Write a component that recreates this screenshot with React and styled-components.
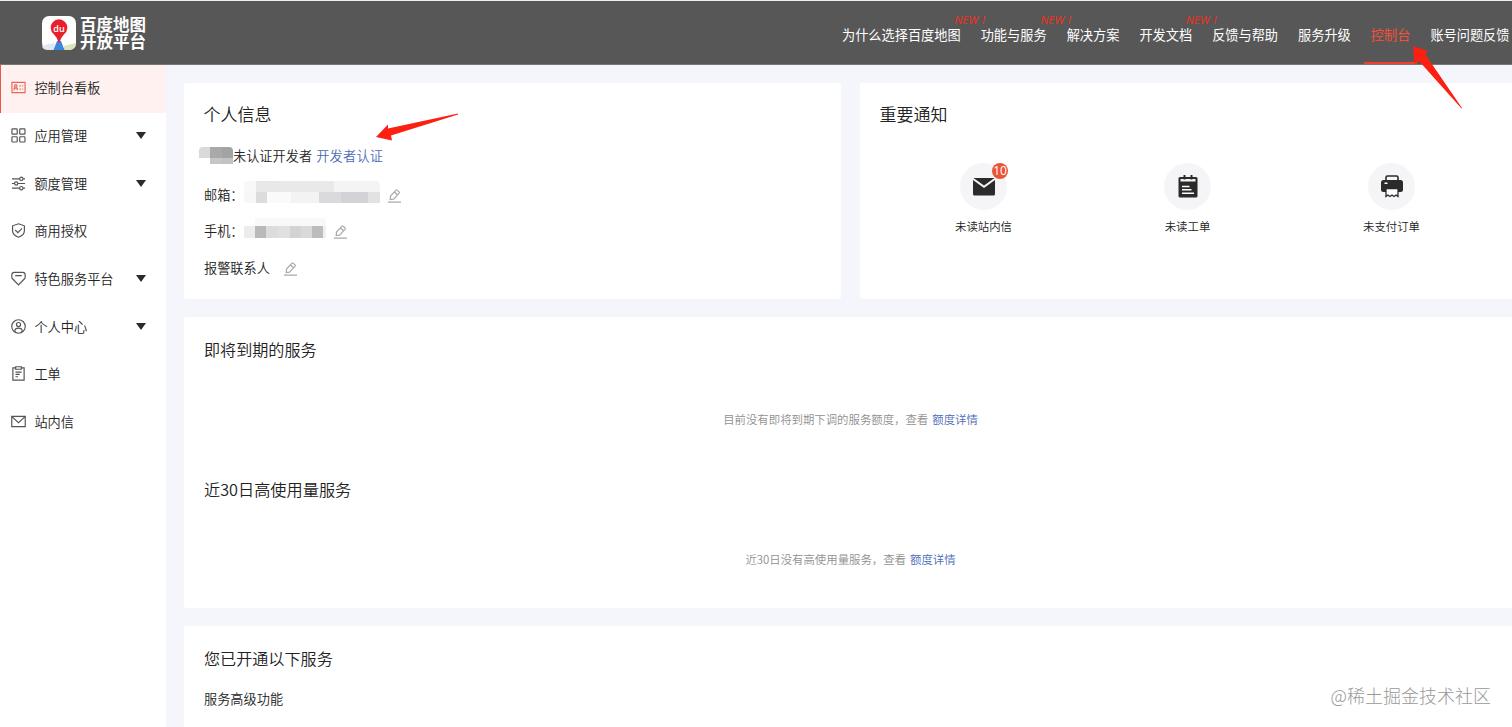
import styled, { createGlobalStyle } from 'styled-components';

// ==========================================
//              GLOBAL STYLES
// ==========================================
const GlobalStyle = createGlobalStyle`
  * {
    box-sizing: border-box;
  }

  body {
    margin: 0;
    overflow: hidden;
    background: #f5f6fb;
    color: #222;
    font-family: 'Noto Sans CJK SC', sans-serif;
    font-size: 13.2px;
    font-weight: 350;
  }
`;

const Page = styled.div`
  position: relative;
  width: 1512px;
  height: 727px;
  overflow: hidden;
`;

// ==========================================
//                 HEADER
// ==========================================
const Header = styled.header`
  display: flex;
  justify-content: space-between;
  height: 65px;
  padding-left: 42px;
  border-top: 1px solid #eef0ea;
  border-bottom: 1px solid #777;
  background: #575757;
`;

const Logo = styled.div`
  display: flex;
  align-items: center;
  gap: 4px;
`;

const LogoText = styled.div`
  display: flex;
  flex-direction: column;
  color: #fff;
  font-size: 16.5px;
  font-weight: 700;
  line-height: 17px;
`;

const Nav = styled.nav`
  display: flex;
  flex: none;
  margin-right: -8px;
`;

const NavItem = styled.a`
  position: relative;
  padding: 0 ${({ $last }) => ($last ? '10.5px' : '10px')} 0 10px;
  color: ${({ $active }) => ($active ? '#f2503c' : '#fff')};
  font-weight: 400;
  line-height: 68px;
  white-space: nowrap;

  &::after {
    content: '';
    display: ${({ $active }) => ($active ? 'block' : 'none')};
    position: absolute;
    left: 3px;
    right: 3px;
    top: 61px;
    height: 2px;
    background: #f2402c;
  }
`;

const NewTag = styled.em`
  position: absolute;
  top: 12px;
  left: calc(100% - 16.5px);
  color: #f2301c;
  font-family: 'Open Sans', sans-serif;
  font-size: 11.5px;
  font-weight: 500;
  line-height: 14px;
  word-spacing: 1px;
`;

// ==========================================
//                 SIDEBAR
// ==========================================
const Body = styled.div`
  display: flex;
  height: 662px;
`;

const Sidebar = styled.aside`
  flex: none;
  width: 166px;
  background: #fff;
`;

const MenuItem = styled.div`
  display: flex;
  align-items: center;
  height: 47.7px;
  padding: 0 20px 2px 10px;
  border-left: 1px solid ${({ $active }) => ($active ? '#e8574a' : 'transparent')};
  background: ${({ $active }) => ($active ? '#fff1ef' : '#fff')};
  color: ${({ $active }) => ($active ? '#e8675a' : '#555')};

  svg {
    flex: none;
  }
`;

const MenuLabel = styled.span`
  flex: 1;
  margin-left: 8.4px;
  color: #222;
`;

const Caret = styled.i`
  border: 5px solid transparent;
  border-top: 7px solid #2b2b2b;
  border-bottom: 0;
`;

// ==========================================
//                 CONTENT
// ==========================================
const Main = styled.main`
  flex: none;
  display: flex;
  flex-direction: column;
  gap: 18px;
  width: 1351px;
  padding: 18px 0 0 18px;
`;

const TopRow = styled.div`
  display: flex;
  gap: 19px;
  height: 216px;
`;

const Card = styled.section`
  flex: none;
  width: ${({ $width }) => $width || '1333px'};
  height: ${({ $height }) => $height || 'auto'};
  padding: 20px;
  border-radius: 3px;
  background: #fff;
`;

const CardTitle = styled.h2`
  margin: 0;
  font-size: ${({ $size }) => $size || '16.1px'};
  font-weight: 350;
  line-height: 24px;
`;

const InfoTitle = styled(CardTitle)`
  margin: -1px 0 0 -0.5px;
  padding-bottom: 1px;
`;

const InfoRow = styled.div`
  display: flex;
  align-items: center;
  height: ${({ $first }) => ($first ? '37px' : '36.7px')};
  margin: ${({ $first }) => ($first ? '10px 0 1.7px -5px' : '0')};

  svg {
    margin: 3px 0 0 ${({ $iconGap }) => $iconGap || '8px'};
  }
`;

const FieldLabel = styled.span`
  width: 40px;
  white-space: nowrap;
`;

const Link = styled.a`
  margin-left: 4px;
  color: #4a6bb8;
`;

const VerifyLink = styled(Link)`
  letter-spacing: 0.25px;
`;

/* Pixelated strip that hides the private account data */
const Mosaic = styled.div`
  width: ${({ $width }) => $width}px;
  height: ${({ $height }) => $height}px;
  margin: ${({ $margin }) => $margin || '0'};
  border-radius: 4px 4px 0 0;
  overflow: hidden;
`;

const MosaicLine = styled.div`
  display: flex;
  height: ${({ $height }) => $height}px;
`;

const MosaicCell = styled.span`
  flex: ${({ $span }) => $span} 0 0;
  background: ${({ $tone }) => $tone};
`;

const Notices = styled.div`
  display: flex;
  margin: 36px 0 0 1.5px;
`;

const Notice = styled.div`
  display: flex;
  flex-direction: column;
  align-items: center;
  width: 204px;
  font-size: 11.4px;
  line-height: 18px;
`;

const NoticeIcon = styled.div`
  position: relative;
  display: flex;
  align-items: center;
  justify-content: center;
  width: 47px;
  height: 47px;
  margin-bottom: 7px;
  border-radius: 50%;
  background: #f5f5f7;
`;

const Badge = styled.span`
  position: absolute;
  top: 0;
  right: -1px;
  width: 16px;
  height: 16px;
  border-radius: 50%;
  background: #ea5439;
  color: #fff;
  font-family: 'Open Sans', sans-serif;
  font-size: 12px;
  font-weight: 500;
  line-height: 16px;
  text-align: center;
`;

const Empty = styled.p`
  margin: 0;
  padding: ${({ $padding }) => $padding};
  color: #909090;
  font-size: 11.4px;
  line-height: 20px;
  text-align: center;
`;

const SubTitle = styled.h3`
  margin: 17px 0 0;
  font-size: 13.2px;
  font-weight: 350;
  line-height: 24px;
`;

const Arrow = styled.svg`
  position: absolute;
  left: ${({ $left }) => $left}px;
  top: ${({ $top }) => $top}px;
  fill: #fb2010;
`;

const Watermark = styled.div`
  position: absolute;
  right: 21px;
  bottom: 18px;
  color: #999;
  font-size: 18px;
  font-weight: 300;
  line-height: 27px;
`;

// ==========================================
//                  ICONS
// ==========================================
const Icon = ({ children, size = 15 }) => (
  <svg width={size} height={size} viewBox="0 0 16 16" fill="none" stroke="currentColor" strokeWidth="1.25">
    {children}
  </svg>
);

const icons = {
  board: (
    <Icon>
      <path d="M1 2.5h14v11H1zM3.3 11V8.6h3.4V11M9 6.2h1.5M12 6.2h1M9 9.8h1.5M12 9.8h1" />
      <circle cx="5" cy="6.3" r="1.3" />
    </Icon>
  ),
  apps: (
    <Icon>
      <rect x="1" y="1" width="5.6" height="5.6" rx=".7" />
      <rect x="9.3" y="1" width="5.6" height="5.6" rx=".7" />
      <rect x="1" y="9.3" width="5.6" height="5.6" rx=".7" />
      <rect x="9.3" y="9.3" width="5.6" height="5.6" rx=".7" />
    </Icon>
  ),
  quota: (
    <Icon>
      <path d="M1 3h8M13 3h2M1 8h2.5M7.5 8H15M1 13h8M13 13h2" />
      <circle cx="11" cy="3" r="1.8" />
      <circle cx="5.5" cy="8" r="1.8" />
      <circle cx="11" cy="13" r="1.8" />
    </Icon>
  ),
  shield: (
    <Icon>
      <path d="M8 .8 14.3 3v5.2c0 3.2-2.5 5.6-6.3 7-3.8-1.4-6.3-3.8-6.3-7V3L8 .8ZM4.5 7.5l2.8 2.7 4.5-4.5" />
    </Icon>
  ),
  feature: (
    <Icon>
      <path d="M3.5 1.4h9c1.5 0 2.6 1.2 2.6 2.6v2.8c0 .6-.3 1.1-.7 1.5L8 14.8 1.6 8.3c-.4-.4-.7-.9-.7-1.5V4c0-1.4 1.1-2.6 2.6-2.6ZM4.5 5h7" />
    </Icon>
  ),
  user: (
    <Icon>
      <circle cx="8" cy="8" r="7.2" />
      <circle cx="8" cy="5.9" r="2.2" />
      <path d="M4.2 13.8v-1.5C4.2 10.5 5.8 9.7 8 9.7s3.8.8 3.8 2.6v1.5" />
    </Icon>
  ),
  order: (
    <Icon>
      <path d="M5 2H2v13h12V2h-3M5 .8h6v2.7H5zM4.8 6.5h6.5M4.8 9h4.5M4.8 11.5h2.7" />
    </Icon>
  ),
  mail: (
    <Icon>
      <path d="M.8 2.5h14.4v11H.8zM1 2.8l7 6.4 7-6.4" />
    </Icon>
  ),
};

const EditIcon = () => (
  <svg width="13" height="14" viewBox="0 0 13 14" fill="none" stroke="#aaa" strokeWidth="1.2">
    <path d="M0 13.2h13M2.2 10.6l.3-3.5L8 1.2q.6-.6 1.2 0l1.9 1.7q.6.6 0 1.2L5.600 10.1l-3.400.5ZM6.500 3l2.900 2.700" />
  </svg>
);

const LogoMark = () => (
  <svg width="34" height="34" viewBox="0 0 34 34">
    <rect width="34" height="34" rx="7" fill="#fff" />
    <path d="M0 30.5 6 28l7-1-1 7H7q-6 0-7-3.5Z" fill="#dfe9f4" />
    <path d="M22 34v-4l12-3q0 7-7 7Z" fill="#d9e6ba" />
    <path d="m15 25-3.5 9h11L19 25Z" fill="#3b87dd" />
    <path d="M17 27.5Q15.7 22 11.7 18A8.3 8.3 0 1 1 22.3 18Q18.3 22 17 27.5Z" fill="#e9202c" />
    <text x="17" y="15.5" fill="#fff" fontSize="9" fontWeight="600" fontFamily="Open Sans" textAnchor="middle">du</text>
  </svg>
);

const noticeIcons = {
  mail: (
    <svg width="24" height="20" viewBox="0 0 24 20" fill="#2b2b2b">
      <path d="M1.5 1h21L12 8.5ZM1 3l11 8 11-8v14q0 1.5-1.5 1.5h-19Q1 18.5 1 17Z" />
    </svg>
  ),
  order: (
    <svg width="20" height="23" viewBox="0 0 20 23">
      <rect x=".5" y="2" width="19" height="20.5" rx="1.5" fill="#2b2b2b" />
      <path d="M2.5 4h15v2.5h-15z" fill="#f5f5f7" />
      <path d="M6.5 0v4.5M13.5 0v4.5" stroke="#2b2b2b" strokeWidth="2" />
      <path d="M4 11.5h7.5M4 14.8h9.5M4 18.2h12" stroke="#fff" strokeWidth="1.5" />
    </svg>
  ),
  print: (
    <svg width="22" height="23" viewBox="0 0 22 23">
      <path d="M5 6V2.5q0-1.5 1.5-1.5h9q1.5 0 1.5 1.5V6" fill="none" stroke="#2b2b2b" strokeWidth="1.6" />
      <rect y="5" width="22" height="12" rx="2.5" fill="#2b2b2b" />
      <path d="M3.5 7.5H6.5V9H3.5z" fill="#fff" />
      <path d="M5 13.5h12V21.5l-2-1.5L13 21.5l-2-1.5L9 21.5l-2-1.5L5 21.5Z" fill="#fff" stroke="#2b2b2b" strokeWidth="1.3" />
    </svg>
  ),
};

// ==========================================
//                   DATA
// ==========================================
const navItems = [
  { text: '为什么选择百度地图', isNew: true },
  { text: '功能与服务', isNew: true },
  { text: '解决方案' },
  { text: '开发文档', isNew: true },
  { text: '反馈与帮助' },
  { text: '服务升级' },
  { text: '控制台', active: true },
  { text: '账号问题反馈', last: true },
];

const menuItems = [
  { text: '控制台看板', icon: 'board', active: true },
  { text: '应用管理', icon: 'apps', expandable: true },
  { text: '额度管理', icon: 'quota', expandable: true },
  { text: '商用授权', icon: 'shield' },
  { text: '特色服务平台', icon: 'feature', expandable: true },
  { text: '个人中心', icon: 'user', expandable: true },
  { text: '工单', icon: 'order' },
  { text: '站内信', icon: 'mail' },
];

const notices = [
  { text: '未读站内信', icon: 'mail', count: 10 },
  { text: '未读工单', icon: 'order' },
  { text: '未支付订单', icon: 'print' },
];

// Each line: [height, [span, tone], ...]
const nameMask = [
  [11, [11, '#d9d9d9'], [12, '#a9a9a9'], [11, '#a3a3a3']],
  [6, [11, '#fff'], [12, '#c6c6c6'], [11, '#c3c3c3']],
];
const mailMask = [
  [11, [12, '#f8f8f8'], [22, '#e8e8e9'], [56, '#e9e9ea'], [46, '#f4f4f4']],
  [11, [12, '#f7f7f7'], [11, '#dcdcdd'], [24, '#fafafa'], [28, '#f3f3f3'], [22, '#dadadd'], [27, '#d3d3d7'], [12, '#e2e2e4']],
];
const phoneMask = [
  [8, [11, '#fff'], [71, '#f8f8f8']],
  [12, [11, '#ececec'], [11, '#b9b9b9'], [12, '#dcdcdc'], [12, '#e0e0e0'], [11, '#d3d3d3'], [11, '#d9d9d9'], [11, '#bcbcbc'], [3, '#f0f0f0']],
];

const Mask = ({ lines, width, margin }) => (
  <Mosaic $width={width} $height={lines.reduce((sum, line) => sum + line[0], 0)} $margin={margin}>
    {lines.map(([height, ...cells], i) => (
      <MosaicLine key={i} $height={height}>
        {cells.map(([span, tone], j) => (
          <MosaicCell key={j} $span={span} $tone={tone} />
        ))}
      </MosaicLine>
    ))}
  </Mosaic>
);

// ==========================================
//             MAIN COMPONENT
// ==========================================
export default function App() {
  return (
    <Page lang="zh-CN">
      <GlobalStyle />

      <Header>
        <Logo>
          <LogoMark />
          <LogoText>
            <span>百度地图</span>
            <span>开放平台</span>
          </LogoText>
        </Logo>
        <Nav>
          {navItems.map((item) => (
            <NavItem key={item.text} $active={item.active} $last={item.last}>
              {item.text}
              {item.isNew && <NewTag>NEW !</NewTag>}
            </NavItem>
          ))}
        </Nav>
      </Header>

      <Body>
        <Sidebar>
          {menuItems.map((item) => (
            <MenuItem key={item.text} $active={item.active}>
              {icons[item.icon]}
              <MenuLabel>{item.text}</MenuLabel>
              {item.expandable && <Caret />}
            </MenuItem>
          ))}
        </Sidebar>

        <Main>
          <TopRow>
            <Card $width="657px">
              <InfoTitle $size="17px">个人信息</InfoTitle>
              <InfoRow $first>
                <Mask lines={nameMask} width={34} />
                未认证开发者
                <VerifyLink>开发者认证</VerifyLink>
              </InfoRow>
              <InfoRow>
                <FieldLabel>{'邮箱\uFF1A'}</FieldLabel>
                <Mask lines={mailMask} width={136} margin="-4px 0 0" />
                <EditIcon />
              </InfoRow>
              <InfoRow>
                <FieldLabel>{'手机\uFF1A'}</FieldLabel>
                <Mask lines={phoneMask} width={82} margin="-6px 0 0" />
                <EditIcon />
              </InfoRow>
              <InfoRow $iconGap="14px">
                报警联系人
                <EditIcon />
              </InfoRow>
            </Card>

            <Card $width="657px">
              <InfoTitle $size="17px">重要通知</InfoTitle>
              <Notices>
                {notices.map((notice) => (
                  <Notice key={notice.text}>
                    <NoticeIcon>
                      {noticeIcons[notice.icon]}
                      {notice.count && <Badge>{notice.count}</Badge>}
                    </NoticeIcon>
                    {notice.text}
                  </Notice>
                ))}
              </Notices>
            </Card>
          </TopRow>

          <Card $height="291px">
            <CardTitle>即将到期的服务</CardTitle>
            <Empty $padding="48px 0 48px">
              {'目前没有即将到期下调的服务额度\uFF0C查看'}
              <Link>额度详情</Link>
            </Empty>
            <CardTitle $size="16.2px">近30日高使用量服务</CardTitle>
            <Empty $padding="48px 0 0">
              {'近30日没有高使用量服务\uFF0C查看'}
              <Link>额度详情</Link>
            </Empty>
          </Card>

          <Card $height="140px">
            <CardTitle>您已开通以下服务</CardTitle>
            <SubTitle>服务高级功能</SubTitle>
          </Card>
        </Main>
      </Body>

      {/* Hand-drawn pointers to the verification link and the console tab */}
      <Arrow $left={376} $top={112} width="84" height="30" viewBox="0 0 84 30">
        <path d="M0 25 12 12.5v4L82 1.5v1L15 23.5l1 5Z" />
      </Arrow>
      <Arrow $left={1412} $top={45} width="52" height="66" viewBox="0 0 52 66">
        <path d="M1 1 16 6l-3 3 37 54-.5.5L7 16l-4.5 3Z" />
      </Arrow>
      <Watermark>@稀土掘金技术社区</Watermark>
    </Page>
  );
}
